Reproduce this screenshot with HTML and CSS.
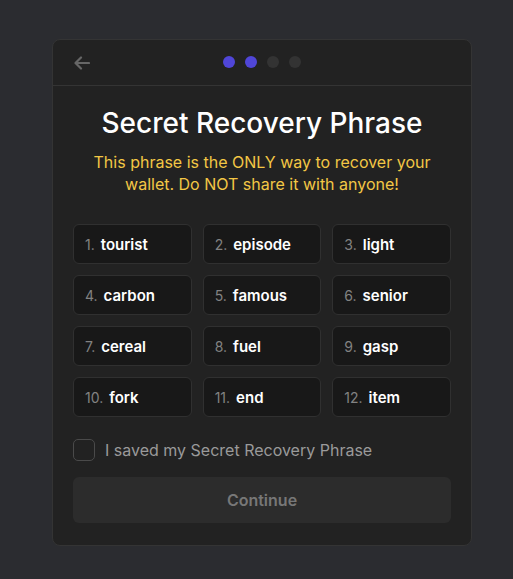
FILE: index.html
```html
<!DOCTYPE html>
<html lang="en">
<head>
<meta charset="utf-8">
<title>Secret Recovery Phrase</title>
<link rel="stylesheet" href="styles.css">
</head>
<body>
<div class="page">
  <div class="card">
    <div class="header">
      <button class="back" aria-label="Back">
        <svg width="16" height="14" viewBox="0 0 16 14" fill="none" stroke="#666" stroke-width="2.2" stroke-linecap="round" stroke-linejoin="round"><path d="M15 7H2M7 1.5L1.5 7L7 12.5"/></svg>
      </button>
      <div class="dots">
        <span class="dot on"></span><span class="dot on"></span><span class="dot"></span><span class="dot"></span>
      </div>
    </div>
    <div class="body">
      <h1 class="title">Secret Recovery Phrase</h1>
      <p class="warn">This phrase is the ONLY way to recover your wallet. Do NOT share it with anyone!</p>
      <div class="grid">
        <div class="cell"><span class="n">1.</span><span class="w">tourist</span></div>
        <div class="cell"><span class="n">2.</span><span class="w">episode</span></div>
        <div class="cell"><span class="n">3.</span><span class="w">light</span></div>
        <div class="cell"><span class="n">4.</span><span class="w">carbon</span></div>
        <div class="cell"><span class="n">5.</span><span class="w">famous</span></div>
        <div class="cell"><span class="n">6.</span><span class="w">senior</span></div>
        <div class="cell"><span class="n">7.</span><span class="w">cereal</span></div>
        <div class="cell"><span class="n">8.</span><span class="w">fuel</span></div>
        <div class="cell"><span class="n">9.</span><span class="w">gasp</span></div>
        <div class="cell"><span class="n">10.</span><span class="w">fork</span></div>
        <div class="cell"><span class="n">11.</span><span class="w">end</span></div>
        <div class="cell"><span class="n">12.</span><span class="w">item</span></div>
      </div>
      <label class="check"><span class="box"></span><span class="label">I saved my Secret Recovery Phrase</span></label>
      <button class="continue">Continue</button>
    </div>
  </div>
</div>
</body>
</html>
```
FILE: styles.css
```css
* { box-sizing: border-box; }
html, body { margin: 0; padding: 0; }
body {
  background: #2b2c30;
  font-family: Inter, "Liberation Sans", sans-serif;
  width: 513px;
  height: 579px;
  overflow: hidden;
}
.page {
  padding: 39px 0 0 52px;
}
.card {
  width: 420px;
  height: 507px;
  background: #222222;
  border: 1px solid #343434;
  border-radius: 8px;
  display: flex;
  flex-direction: column;
}
.header {
  height: 46px;
  border-bottom: 1px solid #343434;
  display: flex;
  align-items: center;
  position: relative;
  flex-shrink: 0;
}
.back {
  background: none;
  border: 0;
  padding: 0;
  margin-left: 21px;
  width: 16px;
  height: 14px;
  display: flex;
}
.dots {
  position: absolute;
  left: 170px;
  top: 16px;
  display: flex;
  gap: 10px;
}
.dot {
  width: 12px;
  height: 12px;
  border-radius: 50%;
  background: #333333;
}
.dot.on { background: #5046d8; }
.body {
  padding: 0 20px;
  display: flex;
  flex-direction: column;
}
.title {
  margin: 20px 0 0;
  font-size: 28px;
  font-weight: 500;
  color: #ffffff;
  text-align: center;
  line-height: 34px;
}
.warn {
  margin: 11px 0 0;
  color: #f3c745;
  font-size: 16px;
  line-height: 22px;
  text-align: center;
  padding: 0 10px;
}
.grid {
  margin-top: 29px;
  display: grid;
  grid-template-columns: repeat(3, 1fr);
  column-gap: 11px;
  row-gap: 11px;
}
.cell {
  height: 40px;
  background: #181818;
  border: 1px solid #303030;
  border-radius: 6px;
  display: flex;
  align-items: center;
  padding-left: 11px;
  gap: 6px;
}
.n {
  color: #828282;
  font-size: 14px;
}
.w {
  color: #ffffff;
  font-size: 15px;
  font-weight: 600;
}
.check {
  margin-top: 22px;
  display: flex;
  align-items: center;
  gap: 10px;
}
.box {
  width: 22px;
  height: 22px;
  border: 1px solid #4a4a4a;
  border-radius: 5px;
  background: #222;
}
.label {
  color: #9a9a9a;
  font-size: 16px;
}
.continue {
  margin-top: 16px;
  height: 46px;
  border: 0;
  border-radius: 6px;
  background: #2c2c2c;
  color: #777777;
  font-family: inherit;
  font-size: 16px;
  font-weight: 600;
  width: 100%;
}
```
